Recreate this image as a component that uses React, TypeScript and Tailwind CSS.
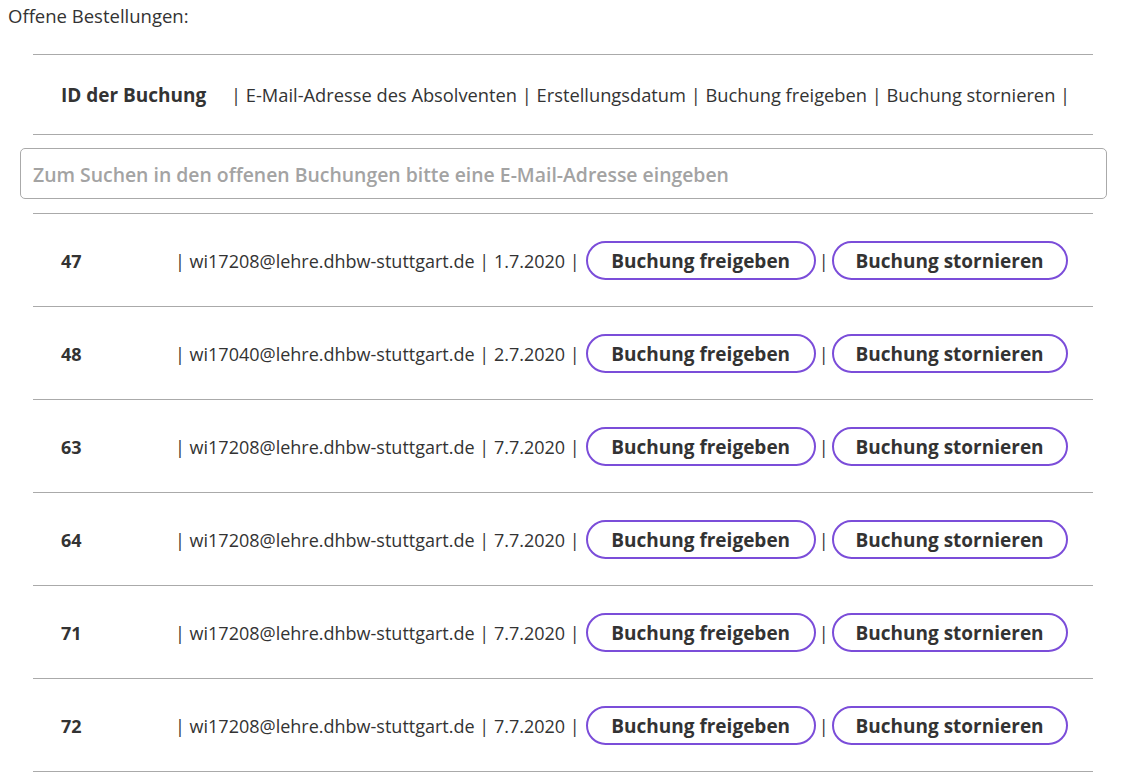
import React from "react";

const rows = [
  { id: "47", email: "wi17208@lehre.dhbw-stuttgart.de", date: "1.7.2020" },
  { id: "48", email: "wi17040@lehre.dhbw-stuttgart.de", date: "2.7.2020" },
  { id: "63", email: "wi17208@lehre.dhbw-stuttgart.de", date: "7.7.2020" },
  { id: "64", email: "wi17208@lehre.dhbw-stuttgart.de", date: "7.7.2020" },
  { id: "71", email: "wi17208@lehre.dhbw-stuttgart.de", date: "7.7.2020" },
  { id: "72", email: "wi17208@lehre.dhbw-stuttgart.de", date: "7.7.2020" },
];

export default function App() {
  return (
    <div
      className="min-h-[776px] bg-white text-[#333333]"
      style={{ fontFamily: '"Open Sans", "Noto Sans", sans-serif' }}
    >
      <div className="pl-2 pt-[4px] h-[54px] text-[18.5px] leading-[24px]">Offene Bestellungen:</div>
      <div className="ml-[33px] w-[1060px]">
        <div className="h-[81px] border-y border-[#aaaaaa] flex items-center pt-[1px] text-[18.3px]">
          <div className="pl-[28px] w-[198px] font-bold text-[19px]">ID der Buchung</div>
          <div className="whitespace-nowrap">| E-Mail-Adresse des Absolventen | Erstellungsdatum | Buchung freigeben | Buchung stornieren |</div>
        </div>
      </div>
      <div className="ml-[20px] w-[1087px] mt-[13px] mb-[14px]">
        <div className="h-[51px] border border-[#aaaaaa] rounded-[5px] flex items-center px-[12px] pt-[2px] text-[19.4px] font-semibold text-[#a3a3a3] whitespace-nowrap">
          Zum Suchen in den offenen Buchungen bitte eine E-Mail-Adresse eingeben
        </div>
      </div>
      <div className="ml-[33px] w-[1060px] border-t border-[#aaaaaa]">
        {rows.map((r) => (
          <div key={r.id} className="h-[93px] border-b border-[#aaaaaa] flex items-center text-[18px]">
            <div className="pl-[28px] w-[142px] font-bold pt-[3px]">{r.id}</div>
            <div className="whitespace-nowrap pt-[3px]">
              | {r.email} | {r.date} |
            </div>
            <button className="ml-[6px] h-[39px] w-[230px] rounded-[20px] border-2 border-[#7b4dd9] font-bold text-[19px] pt-[2px] whitespace-nowrap">
              Buchung freigeben
            </button>
            <span className="mx-[3px] pt-[3px]">|</span>
            <button className="h-[39px] w-[236px] rounded-[20px] border-2 border-[#7b4dd9] font-bold text-[19px] pt-[2px] whitespace-nowrap">
              Buchung stornieren
            </button>
          </div>
        ))}
      </div>
    </div>
  );
}
